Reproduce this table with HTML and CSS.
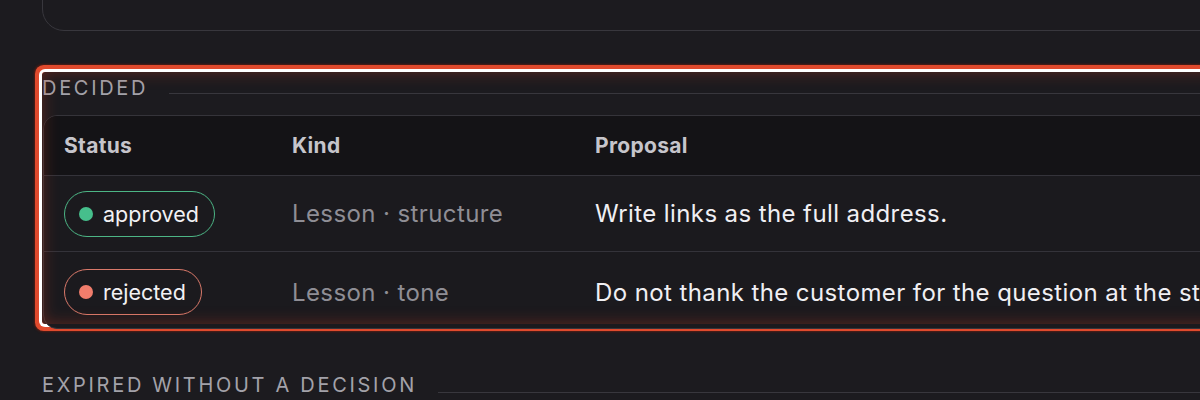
FILE: index.html
```html
<!DOCTYPE html>
<html lang="en">
<head>
  <meta charset="UTF-8">
  <meta name="viewport" content="width=device-width, initial-scale=1.0">
  <title>Proposals</title>
  <link rel="stylesheet" href="styles.css">
</head>
<body>
  <div class="page">
    <div class="card pending-card"></div>

    <section class="group highlighted">
      <div class="group-label">
        <span>Decided</span>
        <div class="rule"></div>
      </div>
      <div class="table-card">
        <table class="proposals">
          <thead>
            <tr>
              <th class="col-status">Status</th>
              <th class="col-kind">Kind</th>
              <th>Proposal</th>
            </tr>
          </thead>
          <tbody>
            <tr>
              <td><span class="badge approved"><i class="dot"></i>approved</span></td>
              <td class="kind">Lesson · structure</td>
              <td class="text">Write links as the full address.</td>
            </tr>
            <tr class="last">
              <td><span class="badge rejected"><i class="dot"></i>rejected</span></td>
              <td class="kind">Lesson · tone</td>
              <td class="text">Do not thank the customer for the question at the st</td>
            </tr>
          </tbody>
        </table>
      </div>
    </section>

    <section class="group expired">
      <div class="group-label">
        <span>Expired without a decision</span>
        <div class="rule"></div>
      </div>
    </section>
  </div>
</body>
</html>
```

FILE: styles.css
```css
html, body {
  margin: 0;
  background: #1c1b1f;
  overflow: hidden;
}

body {
  font-family: "Inter", "Noto Sans", sans-serif;
  color: #efeef2;
}

.page {
  width: 1500px;
  padding-left: 42px;
}

.card {
  border: 1px solid #38373d;
  border-radius: 22px;
  background: #1c1b1f;
}

.pending-card {
  height: 70px;
  margin-top: -41px;
}

.group {
  margin-top: 41px;
}

.group.expired {
  margin-top: 45px;
}

.highlighted {
  position: relative;
  height: 252px;
  border-radius: 3px;
  box-shadow: 0 0 0 3px #ffffff, 0 0 0 7px #e04a2d, 0 0 2px 8px rgba(120, 30, 15, 0.6);
}

.highlighted::after {
  content: "";
  position: absolute;
  inset: 0;
  border-radius: 3px;
  box-shadow: inset 0 0 16px rgba(200, 60, 35, 0.4);
  pointer-events: none;
}

.group-label {
  display: flex;
  align-items: flex-end;
  gap: 21px;
  height: 28px;
  font-size: 20px;
  line-height: 24px;
  letter-spacing: 2.7px;
  text-transform: uppercase;
  color: #a3a2a9;
}

.group-label .rule {
  flex: 1;
  height: 1px;
  background: #38373d;
  margin-bottom: 6px;
}

.expired .group-label .rule {
  margin-bottom: 4px;
}

.table-card {
  margin-top: 15px;
  margin-left: 1px;
  border: 1px solid #35343a;
  border-radius: 14px;
  overflow: hidden;
  background: #1b1a1e;
}

.proposals {
  width: 100%;
  border-collapse: collapse;
  border-spacing: 0;
  text-align: left;
}

.proposals th {
  background: #141316;
  height: 59px;
  padding: 0 20px;
  font-size: 21px;
  font-weight: 700;
  letter-spacing: 0.3px;
  color: #c6c5cb;
  border-bottom: 1px solid #34333a;
}

.col-status {
  width: 188px;
}

.col-kind {
  width: 263px;
}

.proposals td {
  height: 75px;
  padding: 0 20px;
  font-size: 24px;
  letter-spacing: 0.4px;
  white-space: nowrap;
  border-bottom: 1px solid #34333a;
}

.proposals tr.last td {
  height: 70px;
  padding-top: 5px;
  padding-bottom: 1px;
  border-bottom: none;
}

.kind {
  color: #8f8e95;
}

.text {
  color: #f0eff3;
}

.badge {
  display: inline-flex;
  align-items: center;
  gap: 10px;
  height: 44px;
  padding: 0 15px 0 14px;
  border-radius: 24px;
  border: 1.5px solid;
  font-size: 21.5px;
  letter-spacing: 0;
  color: #f2f1f4;
  vertical-align: middle;
}

.dot {
  width: 14px;
  height: 14px;
  border-radius: 50%;
}

.approved {
  border-color: #4cb585;
}

.approved .dot {
  background: #46bf8c;
}

.rejected {
  border-color: #d9796a;
}

.rejected .dot {
  background: #f07d6c;
}
```
